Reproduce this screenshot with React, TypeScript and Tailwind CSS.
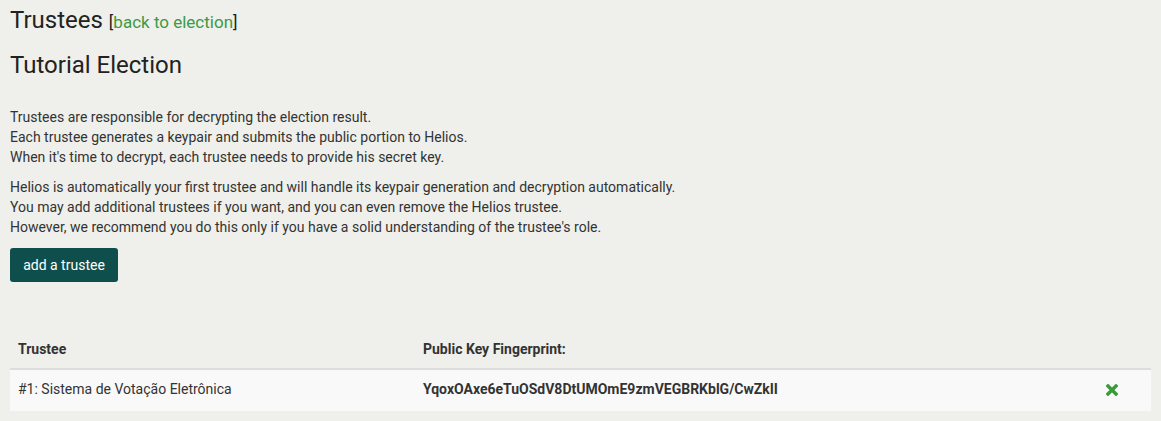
import React from "react";

export default function App() {
  return (
    <div className="min-h-[421px] bg-[#eff0eb] px-[10px] pt-[4px] text-[#333] text-[14px] leading-[20px]" style={{ fontFamily: "Roboto, 'Liberation Sans', sans-serif" }}>
      <h2 className="text-[24px] leading-[32px] font-normal text-[#222]">
        Trustees{" "}
        <span className="text-[17px]">
          [<a className="text-[#3b9a44]">back to election</a>]
        </span>
      </h2>
      <h3 className="mt-[11px] text-[24px] leading-[32px] font-normal text-[#222]">Tutorial Election</h3>
      <p className="mt-[26px]">
        Trustees are responsible for decrypting the election result.
        <br />
        Each trustee generates a keypair and submits the public portion to Helios.
        <br />
        When it's time to decrypt, each trustee needs to provide his secret key.
      </p>
      <p className="mt-[10px]">
        Helios is automatically your first trustee and will handle its keypair generation and decryption automatically.
        <br />
        You may add additional trustees if you want, and you can even remove the Helios trustee.
        <br />
        However, we recommend you do this only if you have a solid understanding of the trustee's role.
      </p>
      <button className="mt-[11px] h-[34px] w-[108px] rounded-[3px] bg-[#0e4f4d] text-white text-[14px]">add a trustee</button>
      <table className="mt-[48px] w-full border-collapse text-[14px]">
        <thead>
          <tr className="border-b-2 border-[#dddddd]">
            <th className="h-[39px] w-[413px] px-[8px] text-left font-bold">Trustee</th>
            <th className="px-[0px] text-left font-bold">Public Key Fingerprint:</th>
            <th className="w-[60px]"></th>
          </tr>
        </thead>
        <tbody>
          <tr className="bg-[#f9f9f9]">
            <td className="h-[42px] px-[8px] pb-[3px]">#1: Sistema de Votação Eletrônica</td>
            <td className="pb-[3px] font-bold">YqoxOAxe6eTuOSdV8DtUMOmE9zmVEGBRKblG/CwZkII</td>
            <td className="pr-[33px] pb-[3px] text-right">
              <svg width="12" height="12" viewBox="0 0 12 12" className="inline-block">
                <path d="M2 2 L10 10 M10 2 L2 10" stroke="#3a9b3a" strokeWidth="3.4" strokeLinecap="square" />
              </svg>
            </td>
          </tr>
        </tbody>
      </table>
    </div>
  );
}
